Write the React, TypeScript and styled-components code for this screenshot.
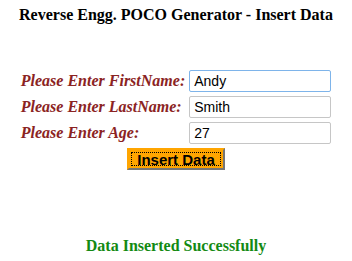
import React from 'react';
import styled, { createGlobalStyle } from 'styled-components';

const GlobalStyle = createGlobalStyle`
  html, body {
    margin: 0;
    padding: 0;
    background: #ffffff;
  }
  body {
    font-family: "Liberation Serif", "Times New Roman", serif;
  }
`;

const Page = styled.div`
  width: 352px;
  height: 261px;
  display: flex;
  flex-direction: column;
  align-items: center;
  box-sizing: border-box;
  padding-top: 6px;
`;

const Title = styled.h3`
  margin: 0;
  font-size: 16px;
  font-weight: bold;
  color: #000;
`;

const Form = styled.div`
  display: grid;
  grid-template-columns: auto 142px;
  column-gap: 4px;
  row-gap: 4px;
  align-items: center;
  margin-top: 46px;
`;

const Label = styled.label`
  font-style: italic;
  font-weight: bold;
  font-size: 16px;
  color: #8b2323;
`;

const Input = styled.input<{ $focused?: boolean }>`
  box-sizing: border-box;
  width: 142px;
  height: 22px;
  padding: 1px 4px;
  font-family: "Liberation Sans", Arial, sans-serif;
  font-size: 14px;
  color: #000;
  border: 1px solid ${(p) => (p.$focused ? '#7eb4ea' : '#c6c6c6')};
  border-radius: 2px;
  outline: none;
`;

const Button = styled.button`
  box-sizing: border-box;
  margin-top: 4px;
  width: 98px;
  height: 22px;
  padding: 0;
  background: #ffa500;
  font-family: "Liberation Sans", Arial, sans-serif;
  font-size: 15px;
  font-weight: bold;
  color: #000;
  border: 2px outset #c9c9c9;
  border-top-color: #ffa500;
  border-left-color: #ffa500;
  outline: 1px dotted #000;
  outline-offset: -5px;
`;

const Message = styled.div`
  margin-top: auto;
  margin-bottom: 6px;
  font-size: 16px;
  font-weight: bold;
  color: #138a13;
`;

export default function App() {
  return (
    <>
      <GlobalStyle />
      <Page>
        <Title>Reverse Engg. POCO Generator - Insert Data</Title>
        <Form>
          <Label>Please Enter FirstName:</Label>
          <Input $focused defaultValue="Andy" />
          <Label>Please Enter LastName:</Label>
          <Input defaultValue="Smith" />
          <Label>Please Enter Age:</Label>
          <Input defaultValue="27" />
        </Form>
        <Button>Insert Data</Button>
        <Message>Data Inserted Successfully</Message>
      </Page>
    </>
  );
}
